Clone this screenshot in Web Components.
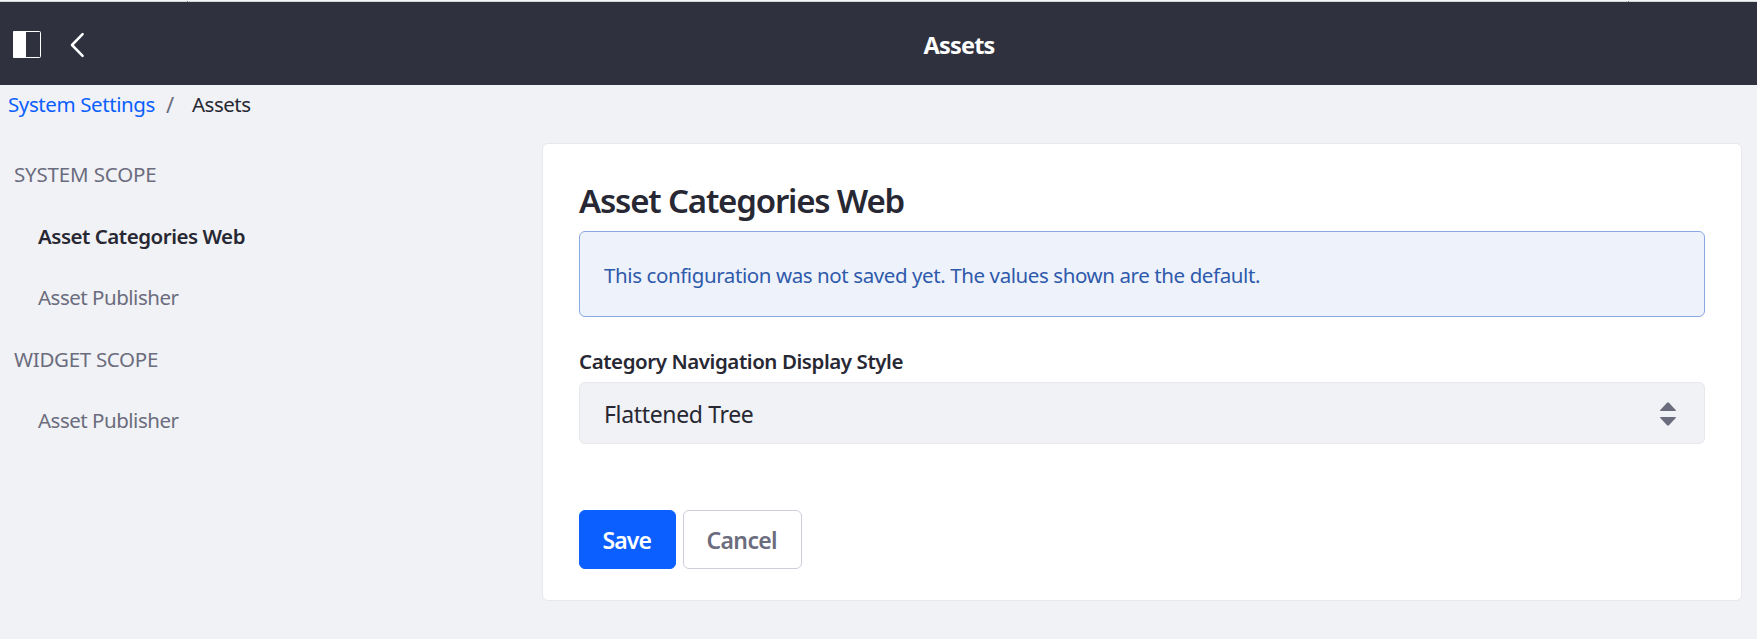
<!DOCTYPE html>
<html lang="en">
<head>
<meta charset="utf-8">
<title>Assets</title>
<style>
  html, body { margin: 0; height: 100%; background: #f1f2f5; }
  body { font-family: "Noto Sans", "Open Sans", sans-serif; font-size: 20.5px; color: #272833; overflow: hidden; }
</style>
</head>
<body>
<settings-page></settings-page>
<script>
const define = (name, html, setup) => customElements.define(name, class extends HTMLElement {
  constructor() {
    super();
    this.attachShadow({ mode: 'open' }).innerHTML = html;
  }
  connectedCallback() { if (setup) setup(this); }
});

/* Single line of text whose tracking is adjusted to fill the given measure. */
define('text-run', `<style>
  :host { display: inline-block; white-space: nowrap; font-kerning: normal; }
</style><slot></slot>`, el => {
  const target = parseFloat(el.getAttribute('measure'));
  if (!target) return;
  const natural = el.getBoundingClientRect().width;
  el.style.letterSpacing = ((target - natural) / el.textContent.length) + 'px';
});

define('window-edge', `<style>
  :host { display: block; height: 2px; background:
    linear-gradient(#777, #777) 187px 1px / 1px 1px no-repeat,
    linear-gradient(#777, #777) 1628px 1px / 1px 1px no-repeat,
    linear-gradient(#f4f5f6 50%, #d3d7da 50%); }
</style>`);

define('control-bar', `<style>
  :host { display: grid; grid-template-columns: 161px 1fr; align-items: center; height: 83px; background: #30313f; color: #fff; font-size: 23.5px; font-weight: 700; }
  .tools { display: flex; align-items: center; padding: 2px 0 0 13px; gap: 29px; }
  svg { display: block; }
  .title { line-height: 36px; padding-top: 2px; text-align: center; }
</style>
<div class="tools">
  <svg width="28" height="27" viewBox="0 0 28 27"><rect x=".5" y=".5" width="27" height="26" rx="1" fill="none" stroke="#fff"/><path d="M1 0H13V27H1Q0 27 0 26V1Q0 0 1 0Z" fill="#fff"/></svg>
  <svg width="15" height="26" viewBox="0 0 15 26"><path d="M12.6 2.2L2 13L12.6 23.8" fill="none" stroke="#fff" stroke-width="2.5" stroke-linecap="round" stroke-linejoin="round"/></svg>
</div>
<div class="title"><slot></slot></div>`);

define('bread-crumb', `<style>
  :host { display: flex; height: 38px; line-height: 38px; padding-left: 8px; }
  .link { color: #0b5fff; }
  .sep { color: #6b6c7e; padding: 0 17px 0 11px; font-size: 22px; }
</style>
<text-run class="link" measure="147">System Settings</text-run><text-run class="sep" measure="37">/</text-run><text-run measure="58.5">Assets</text-run>`);

define('nav-heading', `<style>
  :host { display: block; height: 61.5px; line-height: 61.5px; padding-left: 14px; color: #6b6c7e; }
</style><slot></slot>`);

define('nav-item', `<style>
  :host { display: block; height: 61.5px; line-height: 61.5px; padding-left: 38px; color: #6b6c7e; }
  :host([active]) { color: #272833; font-weight: 600; }
</style><slot></slot>`);

define('side-nav', `<style>:host { display: block; padding-top: 1px; }</style><slot></slot>`);

define('sheet-card', `<style>
  :host { display: flex; flex-direction: column; box-sizing: border-box; height: 458px; padding: 37px 36px 0; background: #fff; border: 1px solid #e7e7ed; border-radius: 6px; }
</style><slot></slot>`);

define('sheet-title', `<style>
  :host { display: block; font-size: 33px; font-weight: 600; line-height: 40px; height: 50px; }
</style><slot></slot>`);

define('info-alert', `<style>
  :host { display: block; box-sizing: border-box; height: 86px; line-height: 86px; padding-left: 24px; border: 1px solid #89a7e0; border-radius: 6px; background: #eef2fa; color: #2e5aac; overflow: hidden; }
</style><slot></slot>`);

define('select-field', `<style>
  :host { display: block; margin-top: 29px; }
  .label { font-weight: 600; height: 36px; line-height: 30px; }
  .box { display: flex; align-items: center; justify-content: space-between; box-sizing: border-box; height: 62px; padding: 2px 28px 0 24px; border: 1px solid #e7e7ed; border-radius: 6px; background: #f1f2f5; font-size: 23px; line-height: 58px; }
  svg { display: block; }
</style>
<div class="label"><slot name="label"></slot></div>
<div class="box"><slot></slot>
  <svg width="16" height="24" viewBox="0 0 16 24"><path d="M.4 9Q-.2 8.4 .5 7.7L7.1 .7Q8 -.1 8.9 .7L15.5 7.7Q16.2 8.4 15.6 9Z M.4 15Q-.2 15.6 .5 16.3L7.1 23.3Q8 24.1 8.9 23.3L15.5 16.3Q16.2 15.6 15.6 15Z" fill="#6b6c7e"/></svg>
</div>`);

define('action-button', `<style>
  :host { display: block; }
  button { all: unset; display: block; box-sizing: border-box; height: 59px; line-height: 59px; padding: 0 24px 0 22.5px; border: 1px solid #cdced9; border-radius: 6px; background: #fff; color: #6b6c7e; font-size: 23px; font-weight: 600; }
  :host([primary]) button { background: #0b5fff; border-color: #0b5fff; color: #fff; }
</style><button><slot></slot></button>`);

define('button-row', `<style>:host { display: flex; gap: 7px; margin-top: 66px; }</style><slot></slot>`);

define('settings-page', `<style>
  :host { display: block; }
  .body { display: grid; grid-template-columns: 542px 1200px; margin-top: 20px; }
</style>
<window-edge></window-edge>
<control-bar><text-run measure="71">Assets</text-run></control-bar>
<bread-crumb></bread-crumb>
<div class="body">
  <side-nav>
    <nav-heading><text-run measure="142.5">SYSTEM SCOPE</text-run></nav-heading>
    <nav-item active><text-run measure="207">Asset Categories Web</text-run></nav-item>
    <nav-item><text-run measure="140.5">Asset Publisher</text-run></nav-item>
    <nav-heading><text-run measure="144">WIDGET SCOPE</text-run></nav-heading>
    <nav-item><text-run measure="140.5">Asset Publisher</text-run></nav-item>
  </side-nav>
  <sheet-card>
    <sheet-title><text-run measure="325">Asset Categories Web</text-run></sheet-title>
    <info-alert><text-run measure="656">This configuration was not saved yet. The values shown are the default.</text-run></info-alert>
    <select-field><text-run slot="label" measure="324">Category Navigation Display Style</text-run><text-run measure="149.5">Flattened Tree</text-run></select-field>
    <button-row>
      <action-button primary><text-run measure="48.5">Save</text-run></action-button>
      <action-button><text-run measure="70.5">Cancel</text-run></action-button>
    </button-row>
  </sheet-card>
</div>`);
</script>
</body>
</html>
